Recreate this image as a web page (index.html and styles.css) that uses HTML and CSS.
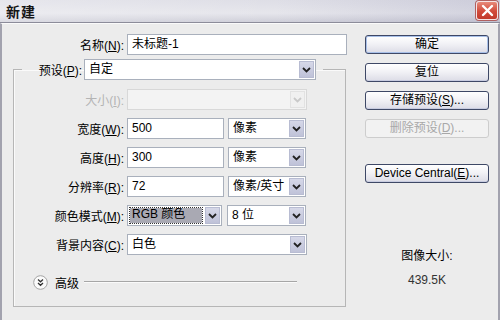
FILE: index.html
```
<!DOCTYPE html>
<html lang="zh-CN">
<head>
    <meta charset="UTF-8">
    <title>新建</title>
    <link rel="stylesheet" href="styles.css">
</head>
<body>
    <div class="window">
        <!-- 标题栏 -->
        <div class="titlebar">
            <span class="title">新建</span>
            <span class="close">
                <svg width="13" height="13" viewBox="0 0 13 13"><path d="M2 2 L11 11 M11 2 L2 11" stroke="#fff" stroke-width="2.4" stroke-linecap="round"/></svg>
            </span>
        </div>
        <div class="content">
            <!-- 左侧表单 -->
            <div class="form">
                <div class="row name-row">
                    <label class="lbl name-lbl">名称(<u>N</u>):</label>
                    <div class="field w-name">未标题-1</div>
                </div>
                <fieldset class="group">
                    <legend class="legend">
                        <span class="legend-lbl">预设(<u>P</u>):</span>
                        <div class="combo w-preset">
                            <span class="val">自定</span>
                            <span class="arrow"><svg width="9" height="6" viewBox="0 0 9 6"><path d="M1 1 L4.5 4.5 L8 1" fill="none" stroke="#222" stroke-width="1.8"/></svg></span>
                        </div>
                    </legend>
                    <div class="row first disabled">
                        <label class="lbl">大小(<u>I</u>):</label>
                        <div class="combo w-full off">
                            <span class="val"></span>
                            <span class="arrow"><svg width="9" height="6" viewBox="0 0 9 6"><path d="M1 1 L4.5 4.5 L8 1" fill="none" stroke="#c9c9c9" stroke-width="1.8"/></svg></span>
                        </div>
                    </div>
                    <div class="row">
                        <label class="lbl">宽度(<u>W</u>):</label>
                        <div class="field w-num">500</div>
                        <div class="combo w-unit">
                            <span class="val">像素</span>
                            <span class="arrow"><svg width="9" height="6" viewBox="0 0 9 6"><path d="M1 1 L4.5 4.5 L8 1" fill="none" stroke="#222" stroke-width="1.8"/></svg></span>
                        </div>
                    </div>
                    <div class="row">
                        <label class="lbl">高度(<u>H</u>):</label>
                        <div class="field w-num">300</div>
                        <div class="combo w-unit">
                            <span class="val">像素</span>
                            <span class="arrow"><svg width="9" height="6" viewBox="0 0 9 6"><path d="M1 1 L4.5 4.5 L8 1" fill="none" stroke="#222" stroke-width="1.8"/></svg></span>
                        </div>
                    </div>
                    <div class="row">
                        <label class="lbl">分辨率(<u>R</u>):</label>
                        <div class="field w-num">72</div>
                        <div class="combo w-unit">
                            <span class="val">像素/英寸</span>
                            <span class="arrow"><svg width="9" height="6" viewBox="0 0 9 6"><path d="M1 1 L4.5 4.5 L8 1" fill="none" stroke="#222" stroke-width="1.8"/></svg></span>
                        </div>
                    </div>
                    <div class="row">
                        <label class="lbl">颜色模式(<u>M</u>):</label>
                        <div class="combo w-mode sel">
                            <span class="val">RGB 颜色</span>
                            <span class="arrow"><svg width="9" height="6" viewBox="0 0 9 6"><path d="M1 1 L4.5 4.5 L8 1" fill="none" stroke="#222" stroke-width="1.8"/></svg></span>
                        </div>
                        <div class="combo w-bits">
                            <span class="val">8 位</span>
                            <span class="arrow"><svg width="9" height="6" viewBox="0 0 9 6"><path d="M1 1 L4.5 4.5 L8 1" fill="none" stroke="#222" stroke-width="1.8"/></svg></span>
                        </div>
                    </div>
                    <div class="row">
                        <label class="lbl">背景内容(<u>C</u>):</label>
                        <div class="combo w-full">
                            <span class="val">白色</span>
                            <span class="arrow"><svg width="9" height="6" viewBox="0 0 9 6"><path d="M1 1 L4.5 4.5 L8 1" fill="none" stroke="#222" stroke-width="1.8"/></svg></span>
                        </div>
                    </div>
                    <!-- 高级 -->
                    <div class="advanced">
                        <span class="toggle">
                            <svg width="15" height="15" viewBox="0 0 15 15">
                                <circle cx="7.5" cy="7.5" r="6.8" fill="#fbfbfb" stroke="#a4a4a4"/>
                                <path d="M5 4.5 L7.5 6.8 L10 4.5 M5 8 L7.5 10.3 L10 8" fill="none" stroke="#333" stroke-width="1.3"/>
                            </svg>
                        </span>
                        <span class="adv-text">高级</span>
                        <span class="adv-line"></span>
                    </div>
                </fieldset>
            </div>
            <!-- 右侧按钮 -->
            <div class="side">
                <a href="JavaScript:;" class="btn default">确定</a>
                <a href="JavaScript:;" class="btn">复位</a>
                <a href="JavaScript:;" class="btn">存储预设(<u>S</u>)...</a>
                <a href="JavaScript:;" class="btn disabled-btn">删除预设(<u>D</u>)...</a>
                <a href="JavaScript:;" class="btn device">Device Central(<u>E</u>)...</a>
                <div class="info">
                    <p>图像大小:</p>
                    <p class="size">439.5K</p>
                </div>
            </div>
        </div>
    </div>
</body>
</html>
```
FILE: styles.css
```
* {
    margin: 0;
    padding: 0;
    box-sizing: border-box;
}
body {
    width: 500px;
    height: 320px;
    overflow: hidden;
    background: #ececec;
    font-family: "Liberation Sans", "Noto Sans CJK SC", sans-serif;
    font-size: 12px;
    color: #000;
}
a {
    text-decoration: none;
    color: #000;
}
u {
    text-decoration: underline;
    text-underline-offset: 1px;
}
.window {
    height: 320px;
    display: flex;
    flex-direction: column;
}
.titlebar {
    height: 23px;
    display: flex;
    align-items: center;
    justify-content: space-between;
    padding: 0 2px 0 6px;
    background: linear-gradient(to right, rgba(255, 255, 255, .25), rgba(255, 255, 255, 0) 55%, rgba(120, 120, 160, .18)),
                linear-gradient(#dedee6, #e6e6ec 60%, #cfcfd9);
    border-bottom: 1px solid #8c8c9a;
}
.title {
    font-family: "Noto Sans CJK SC", sans-serif;
    font-weight: bold;
    font-size: 14px;
    color: #151515;
    letter-spacing: 1px;
}
.close {
    width: 22px;
    height: 19px;
    margin-top: -2px;
    display: flex;
    align-items: center;
    justify-content: center;
    border: 1px solid #f4e4e4;
    border-radius: 3px;
    background: linear-gradient(#e88a7a, #d14a3a 55%, #c23a2c);
    box-shadow: 0 0 0 1px #b06060;
}
.content {
    flex: 1;
    display: flex;
    padding: 10px 0 0 11px;
    border-left: 2px solid #a2a2ae;
    border-right: 2px solid #a2a2ae;
    border-top: 1px solid #fafafa;
}
.form {
    width: 334px;
}
.row {
    display: flex;
    align-items: center;
    height: 21px;
    margin-top: 8px;
}
.lbl {
    width: 110px;
    margin-right: 3px;
    text-align: right;
    white-space: nowrap;
}
.name-row {
    margin-top: 0;
}
.name-lbl {
    width: 111px;
}
.field {
    height: 21px;
    line-height: 19px;
    padding-left: 4px;
    background: #fff;
    border: 1px solid #a9b0bc;
}
.w-name {
    width: 220px;
}
.w-num {
    width: 97px;
    margin-right: 4px;
}
.combo {
    height: 21px;
    display: flex;
    background: #fff;
    border: 1px solid #a9b0bc;
}
.combo .val {
    flex: 1;
    line-height: 19px;
    padding-left: 4px;
    white-space: nowrap;
    overflow: hidden;
}
.combo .arrow {
    width: 15px;
    margin: 1px;
    display: flex;
    align-items: center;
    justify-content: center;
    background: linear-gradient(#d6d8e8, #bfc2d8);
    border: 1px solid #b8bcd2;
}
.w-preset {
    width: 232px;
}
.w-full {
    width: 180px;
}
.w-unit {
    width: 78px;
}
.w-mode {
    width: 95px;
    margin-right: 5px;
}
.w-bits {
    width: 79px;
}
.sel .val {
    margin: 2px;
    padding-left: 2px;
    line-height: 13px;
    background: #a9a9b3;
    outline: 1px dotted #333;
}
.off {
    background: #f3f3f3;
    border-color: #d8d8d8;
}
.off .arrow {
    background: #f0f0f0;
    border-color: #e2e2e2;
}
.disabled .lbl {
    color: #b4b4b4;
}
.group {
    width: 333px;
    margin-top: 4px;
    padding: 0 0 16px 0;
    border: 1px solid #b6b6b6;
    box-shadow: inset 1px 1px 0 #fafafa;
    min-width: 0;
}
.legend {
    margin-left: 8px;
    padding: 0 7px 0 13px;
    display: flex;
    align-items: center;
}
.legend-lbl {
    width: 47px;
    margin-right: 2px;
    text-align: right;
    white-space: nowrap;
}
.first {
    margin-top: 9px;
}
.advanced {
    display: flex;
    align-items: center;
    height: 16px;
    margin-top: 19px;
    padding-left: 19px;
    padding-right: 48px;
}
.toggle {
    display: flex;
    width: 15px;
    height: 15px;
}
.adv-text {
    margin-left: 7px;
    font-family: "Noto Sans CJK SC", sans-serif;
}
.adv-line {
    flex: 1;
    margin-left: 5px;
    border-top: 1px solid #a6a6a6;
    border-bottom: 1px solid #fafafa;
}
.side {
    width: 124px;
    margin-left: 18px;
    display: flex;
    flex-direction: column;
}
.btn {
    display: block;
    height: 19px;
    margin-top: 9px;
    line-height: 17px;
    text-align: center;
    border: 1px solid #3e4866;
    border-radius: 3px;
    background: linear-gradient(#ffffff, #f2f2f6 45%, #dcdce6);
    box-shadow: inset 0 -1px 0 #c8cce0;
}
.default {
    margin-top: 1px;
    box-shadow: inset 0 0 0 1px #a8c0e8;
}
.disabled-btn {
    color: #a8a8a8;
    border-color: #cdcdcd;
    background: #f2f2f2;
    box-shadow: none;
}
.device {
    margin-top: 26px;
}
.info {
    margin-top: 65px;
    text-align: center;
    line-height: 16px;
}
.size {
    margin-top: 8px;
    color: #333;
}
```
